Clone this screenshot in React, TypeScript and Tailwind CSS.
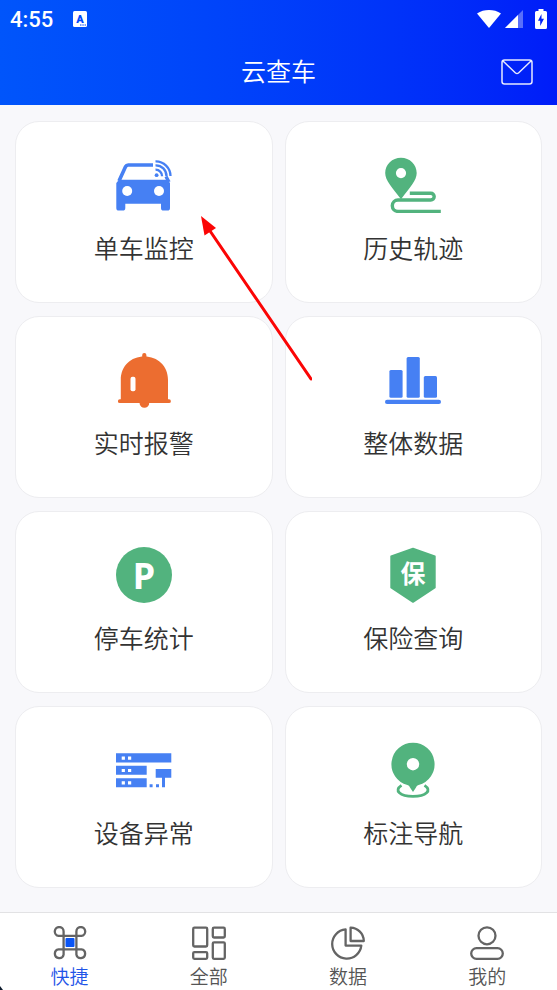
import type { ReactNode } from "react";
import clsx from "clsx";

type Item = {
  label: string;
  icon: ReactNode;
};

const BLUE = "#4680f3";
const GREEN = "#52b37e";
const ORANGE = "#ec6d30";

function CarIcon() {
  return (
    <svg viewBox="0 0 56 56" className="h-14 w-14" fill="none" aria-hidden="true">
      <path d="M3 24 9.6 9.6Q10.4 8 12.2 8H37" stroke={BLUE} strokeWidth="3.6" />
      <path d="M50 19.5 53 25" stroke={BLUE} strokeWidth="3.4" />
      <path
        d="M3 22.8H51.5L54 26V51a2.6 2.6 0 0 1-2.6 2.6H47.6A2.6 2.6 0 0 1 45 51V46.8H9.3V51a2.6 2.6 0 0 1-2.6 2.6H2.9A2.6 2.6 0 0 1 .3 51V26Z"
        fill={BLUE}
      />
      <circle cx="11.2" cy="34" r="5" fill="#fff" />
      <circle cx="43" cy="34" r="5" fill="#fff" />
      <circle cx="40.6" cy="18.2" r="1.9" fill={BLUE} />
      <path d="M39.5 12.7a6.4 6.4 0 0 1 6.6 6.6M39.5 8.3a10.7 10.7 0 0 1 11 11M39.5 4.4a14.7 14.7 0 0 1 15 14.7" stroke={BLUE} strokeWidth="2.3" />
    </svg>
  );
}

function TrackIcon() {
  return (
    <svg viewBox="0 0 56 56" className="h-14 w-14" fill="none" aria-hidden="true">
      <path
        fillRule="evenodd"
        d="M16 .8C7.2.8.2 7.6.2 16c0 7.6 7 14.3 15.8 26.2C24.8 30.3 31.7 23.6 31.7 16 31.7 7.6 24.8.8 16 .8Zm0 10.2a5.1 5.1 0 1 1 0 10.2 5.1 5.1 0 0 1 0-10.2Z"
        fill={GREEN}
      />
      <path d="M24.8 36.2H45.8a3.4 3.4 0 0 1 0 6.8H13a5.7 5.7 0 0 0 0 11.4H55.8" stroke={GREEN} strokeWidth="3.4" />
    </svg>
  );
}

function BellIcon() {
  return (
    <svg viewBox="0 0 56 56" className="h-14 w-14" aria-hidden="true">
      <g fill={ORANGE}>
        <rect x="26.2" y="1" width="4.2" height="6" rx="2" />
        <path d="M4.8 28C4.8 14 15 4.6 28.3 4.6S52 14 52 28V47.3H53a1.9 1.9 0 0 1 0 3.8H3.8a1.9 1.9 0 0 1 0-3.8H4.8Z" />
        <path d="M23.5 50.5H33.3a4.9 5.3 0 0 1-9.8 0Z" />
      </g>
      <rect x="14.5" y="24.7" width="5" height="14.6" rx="2" fill="#fff" />
    </svg>
  );
}

function BarsIcon() {
  return (
    <svg viewBox="0 0 56 56" className="h-14 w-14" fill={BLUE} aria-hidden="true">
      <rect x="4.4" y="18" width="13.2" height="27.7" rx="1.5" />
      <rect x="21.6" y="5" width="13.2" height="40.7" rx="1.5" />
      <rect x="38.8" y="24" width="13.2" height="21.7" rx="1.5" />
      <rect x="0" y="47.8" width="56" height="4.2" rx="2.1" />
    </svg>
  );
}

function ParkingIcon() {
  return (
    <svg viewBox="0 0 56 56" className="h-14 w-14" aria-hidden="true">
      <circle cx="28" cy="28" r="28" fill={GREEN} />
      <text x="28" y="42" textAnchor="middle" fontFamily="Noto Sans, sans-serif" fontSize="36" fontWeight="700" fill="#fff">
        P
      </text>
    </svg>
  );
}

function InsuranceIcon() {
  return (
    <svg viewBox="0 0 56 56" className="h-14 w-14" aria-hidden="true">
      <path d="M28 1.5 49.9 9.2V40.5L28 55 6.1 40.5V9.2Z" fill={GREEN} stroke={GREEN} strokeWidth="1.6" strokeLinejoin="round" />
      <text x="28" y="36" textAnchor="middle" fontSize="25" fontWeight="700" fill="#fff">
        保
      </text>
    </svg>
  );
}

function ServerIcon() {
  return (
    <svg viewBox="0 0 56 56" className="h-14 w-14" aria-hidden="true">
      <g fill={BLUE}>
        <path d="M0 11.3H55.3V20.5H0ZM0 23.8H30.7V32.8H0ZM0 36.2H30.7V45.2H0Z" />
        <path d="M39.7 27H55.3V35.8H49V45.2H46V35.8H39.7ZM33.6 42.2h3v3h-3ZM40 42.2h3v3h-3Z" />
      </g>
      <path
        d="M5.7 14.6h3.2v3.2H5.7ZM12 14.6h3.2v3.2H12ZM5.7 26.9h3.2v3.2H5.7ZM12 26.9h3.2v3.2H12ZM5.7 39.2h3.2v3.2H5.7ZM12 39.2h3.2v3.2H12Z"
        fill="#fff"
      />
    </svg>
  );
}

function MarkerIcon() {
  return (
    <svg viewBox="0 0 56 56" className="h-14 w-14" fill="none" aria-hidden="true">
      <path
        fillRule="evenodd"
        d="M28 .8a21.4 21.4 0 0 0-5.6 42.1c1.8.5 2 1.3 2.6 2.7L28 50l3-4.400c.6-1.400.8-2.200 2.600-2.700A21.400 21.400 0 0 0 28 .8Zm0 15.200a6.200 6.200 0 1 1 0 12.400 6.200 6.200 0 0 1 0-12.400Z"
        fill={GREEN}
      />
      <path d="M16.5 43.3C8.5 48.5 15 54.3 28 54.3S47.5 48.5 39.5 43.3" stroke={GREEN} strokeWidth="2.8" />
    </svg>
  );
}

function QuickIcon() {
  return (
    <svg viewBox="0 0 34 34" className="h-[34px] w-[34px]" fill="none" stroke="#646464" strokeWidth="2.3" aria-hidden="true">
      <path d="M10.6 9.8H5.6A4.4 4.4 0 1 1 10.6 5.4V28.6a4.4 4.4 0 1 1-5-5.2H28.4a4.4 4.4 0 1 1-5 5.2V5.4a4.4 4.4 0 1 1 5 4.4Z" />
      <rect x="12.5" y="12" width="9" height="9" rx="1" fill="#0a55f5" stroke="none" />
    </svg>
  );
}

function AllIcon() {
  return (
    <svg viewBox="0 0 34 34" className="h-[34px] w-[34px]" fill="none" stroke="#646464" strokeWidth="2.3" aria-hidden="true">
      <rect x="1.2" y="1.7" width="14" height="18.8" rx="1.2" />
      <rect x="20.8" y="1.7" width="12" height="9.8" rx="1.2" />
      <rect x="1.2" y="26.1" width="14" height="6.7" rx="1.2" />
      <rect x="20.8" y="16.3" width="12" height="16.5" rx="1.2" />
    </svg>
  );
}

function PieIcon() {
  return (
    <svg viewBox="0 0 34 34" className="h-[34px] w-[34px]" fill="none" stroke="#646464" strokeWidth="2.3" strokeLinejoin="round" aria-hidden="true">
      <path d="M14.6 3.4V19.6H30.3A14.6 14.6 0 1 1 14.6 3.4Z" />
      <path d="M19.6 1.6V15H32.8A13.6 13.6 0 0 0 19.6 1.6Z" />
    </svg>
  );
}

function MineIcon() {
  return (
    <svg viewBox="0 0 34 34" className="h-[34px] w-[34px]" fill="none" stroke="#646464" strokeWidth="2.3" aria-hidden="true">
      <circle cx="17" cy="9.8" r="8.5" />
      <rect x="1.2" y="22.2" width="31.6" height="10.6" rx="5.3" />
    </svg>
  );
}

const shortcuts: Item[] = [
  { label: "单车监控", icon: <CarIcon /> },
  { label: "历史轨迹", icon: <TrackIcon /> },
  { label: "实时报警", icon: <BellIcon /> },
  { label: "整体数据", icon: <BarsIcon /> },
  { label: "停车统计", icon: <ParkingIcon /> },
  { label: "保险查询", icon: <InsuranceIcon /> },
  { label: "设备异常", icon: <ServerIcon /> },
  { label: "标注导航", icon: <MarkerIcon /> },
];

const tabs: Item[] = [
  { label: "快捷", icon: <QuickIcon /> },
  { label: "全部", icon: <AllIcon /> },
  { label: "数据", icon: <PieIcon /> },
  { label: "我的", icon: <MineIcon /> },
];

function StatusBar() {
  return (
    <div className="flex h-[38px] items-center px-[10px]">
      <span className="pt-0.5 font-[Roboto,sans-serif] text-[22px] leading-6 font-medium">4:55</span>
      <svg viewBox="0 0 14 16" className="ml-5 h-4 w-[14px]" aria-hidden="true">
        <rect width="14" height="16" rx="1.5" fill="#fff" />
        <text x="7" y="11.5" textAnchor="middle" fontFamily="Roboto, sans-serif" fontSize="11" fontWeight="900" fill="#0048fa">
          A
        </text>
        <path d="M7 14h1.5M9.3 14h1.5M11.6 14h1.4" stroke="#0048fa" strokeWidth="1" />
      </svg>
      <div className="ml-auto flex items-center">
        <svg viewBox="0 0 24 19" className="h-[19px] w-6" aria-hidden="true">
          <path d="M0 3.5C7-1.1 17-1.1 24 3.5L12 18Z" fill="#fff" />
        </svg>
        <svg viewBox="0 0 18 18" className="ml-1 h-[18px] w-[18px]" aria-hidden="true">
          <path d="M18 0V18H0Z" fill="#fff" fillOpacity=".35" />
          <path d="M13 5V18H0Z" fill="#fff" />
        </svg>
        <svg viewBox="0 0 12 20" className="ml-3 h-5 w-3" aria-hidden="true">
          <path d="M3.5 0h5v2H10.5A1.5 1.5 0 0 1 12 3.5V18.5A1.5 1.5 0 0 1 10.5 20H1.5A1.5 1.5 0 0 1 0 18.5V3.5A1.5 1.5 0 0 1 1.5 2H3.5Z" fill="#fff" />
          <path d="M6.5 5 3 11.7H5.2V17L9 9.8H6.5Z" fill="#0020f8" />
        </svg>
      </div>
    </div>
  );
}

export default function App() {
  return (
    <div className="relative flex min-h-screen flex-col bg-[#f8f8fb] font-['Noto_Sans_CJK_SC',sans-serif] font-[350] text-[#333]">
      <header className="bg-linear-to-r from-[#0055fb] to-[#001cf8] text-white">
        <StatusBar />
        <div className="grid h-[67px] grid-cols-[1fr_auto_1fr] items-center px-6">
          <h1 className="col-start-2 pb-1 text-[25px] leading-8">云查车</h1>
          <button type="button" aria-label="消息" className="justify-self-end">
            <svg viewBox="0 0 32 26" className="h-[26px] w-8" fill="none" stroke="#fff" strokeOpacity=".9" strokeWidth="1.5" aria-hidden="true">
              <rect x="1" y="1" width="30" height="24" rx="2.5" />
              <path d="m2 2 12.5 12Q16 15.2 17.5 14L30 2" />
            </svg>
          </button>
        </div>
      </header>

      <main className="relative flex-1 px-[15px] pt-4 pb-6">
        <div className="grid grid-cols-2 gap-x-3 gap-y-[13px]">
          {shortcuts.map((item) => (
            <button
              key={item.label}
              type="button"
              className="flex flex-col items-center gap-[18px] rounded-3xl border border-[#ededf0] bg-white pt-[35px] pb-[39px]"
            >
              {item.icon}
              <span className="text-[25px] leading-8">{item.label}</span>
            </button>
          ))}
        </div>

        {/* Arrow pointing at the first shortcut */}
        <svg viewBox="0 0 112 166" className="pointer-events-none absolute top-[110px] left-[200px] h-[166px] w-28" aria-hidden="true">
          <path d="M111 164 8 13" stroke="#fb0505" strokeWidth="3" strokeLinecap="round" />
          <path d="M1 1 16 13 4.5 20.5Z" fill="#fb0505" />
        </svg>
      </main>

      <nav className="grid grid-cols-4 border-t border-[#e2e2e4] bg-white pt-[13px] pb-0.5">
        {tabs.map((tab, i) => (
          <a
            key={tab.label}
            href="#"
            aria-current={i === 0 ? "page" : undefined}
            className={clsx("flex flex-col items-center gap-1", i === 0 ? "text-[#1f55e8]" : "text-[#555]")}
          >
            {tab.icon}
            <span className="text-[19px] leading-6">{tab.label}</span>
          </a>
        ))}
      </nav>
      <svg viewBox="0 0 3 4" className="absolute bottom-0 left-0 h-1 w-[3px]" aria-hidden="true">
        <path d="M0 0 3 4H0Z" fill="#0c1a2c" />
      </svg>
    </div>
  );
}
